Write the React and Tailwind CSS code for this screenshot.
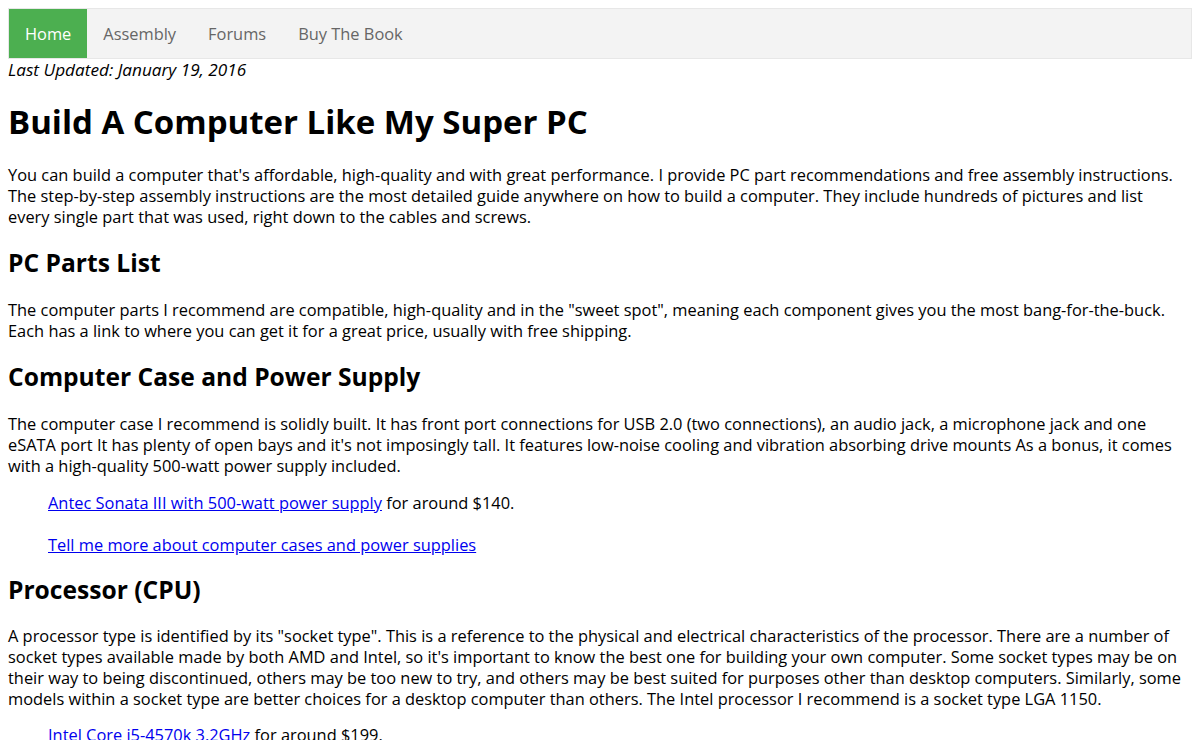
const navItems = ["Home", "Assembly", "Forums", "Buy The Book"];

function Heading({ children, className = "" }) {
  return <h2 className={"text-[24.6px] font-bold leading-[30px] " + className}>{children}</h2>;
}

export default function App() {
  return (
    <div
      className="min-h-screen bg-white p-2 text-[16.4px] leading-[21px] text-black"
      style={{ fontFamily: '"Open Sans", "Noto Sans", sans-serif' }}
    >
      <ul className="flex border border-[#e7e7e7] bg-[#f3f3f3]">
        {navItems.map((item, i) => (
          <li key={item}>
            <a
              href="#"
              className={
                "block px-4 py-[14px] " +
                (i === 0 ? "bg-[#4caf50] text-white" : "text-[#666666]")
              }
            >
              {item}
            </a>
          </li>
        ))}
      </ul>

      <div className="text-[17.2px] italic">Last Updated: January 19, 2016</div>

      <h1 className="mt-[22px] text-[33px] font-bold leading-[40px]">
        Build A Computer Like My Super PC
      </h1>
      <p className="mt-[22px] pr-4">
        You can build a computer that's affordable, high-quality and with great performance. I
        provide PC part recommendations and free assembly instructions. The step-by-step assembly
        instructions are the most detailed guide anywhere on how to build a computer. They include
        hundreds of pictures and list every single part that was used, right down to the cables and
        screws.
      </p>

      <Heading className="mt-[21px]">PC Parts List</Heading>
      <p className="mt-[21px]">
        The computer parts I recommend are compatible, high-quality and in the "sweet spot", meaning
        each component gives you the most bang-for-the-buck. Each has a link to where you can get it
        for a great price, usually with free shipping.
      </p>

      <Heading className="mt-[21px]">Computer Case and Power Supply</Heading>
      <p className="mt-[21px]">
        The computer case I recommend is solidly built. It has front port connections for USB 2.0
        (two connections), an audio jack, a microphone jack and one eSATA port It has plenty of open
        bays and it's not imposingly tall. It features low-noise cooling and vibration absorbing drive
        mounts As a bonus, it comes with a high-quality 500-watt power supply included.
      </p>
      <div className="ml-10">
        <p className="mt-4">
          <a href="#" className="text-[#0000ee] underline">
            Antec Sonata III with 500-watt power supply
          </a>{" "}
          for around $140.
        </p>
        <p className="mt-[21px]">
          <a href="#" className="text-[#0000ee] underline">
            Tell me more about computer cases and power supplies
          </a>
        </p>
      </div>

      <Heading className="mt-5">Processor (CPU)</Heading>
      <p className="mt-5">
        A processor type is identified by its "socket type". This is a reference to the physical and
        electrical characteristics of the processor. There are a number of socket types available made
        by both AMD and Intel, so it's important to know the best one for building your own computer.
        Some socket types may be on their way to being discontinued, others may be too new to try, and
        others may be best suited for purposes other than desktop computers. Similarly, some models
        within a socket type are better choices for a desktop computer than others. The Intel
        processor I recommend is a socket type LGA 1150.
      </p>
      <div className="ml-10">
        <p className="mt-[15px]">
          <a href="#" className="text-[#0000ee] underline">
            Intel Core i5-4570k 3.2GHz
          </a>{" "}
          for around $199.
        </p>
      </div>
    </div>
  );
}
